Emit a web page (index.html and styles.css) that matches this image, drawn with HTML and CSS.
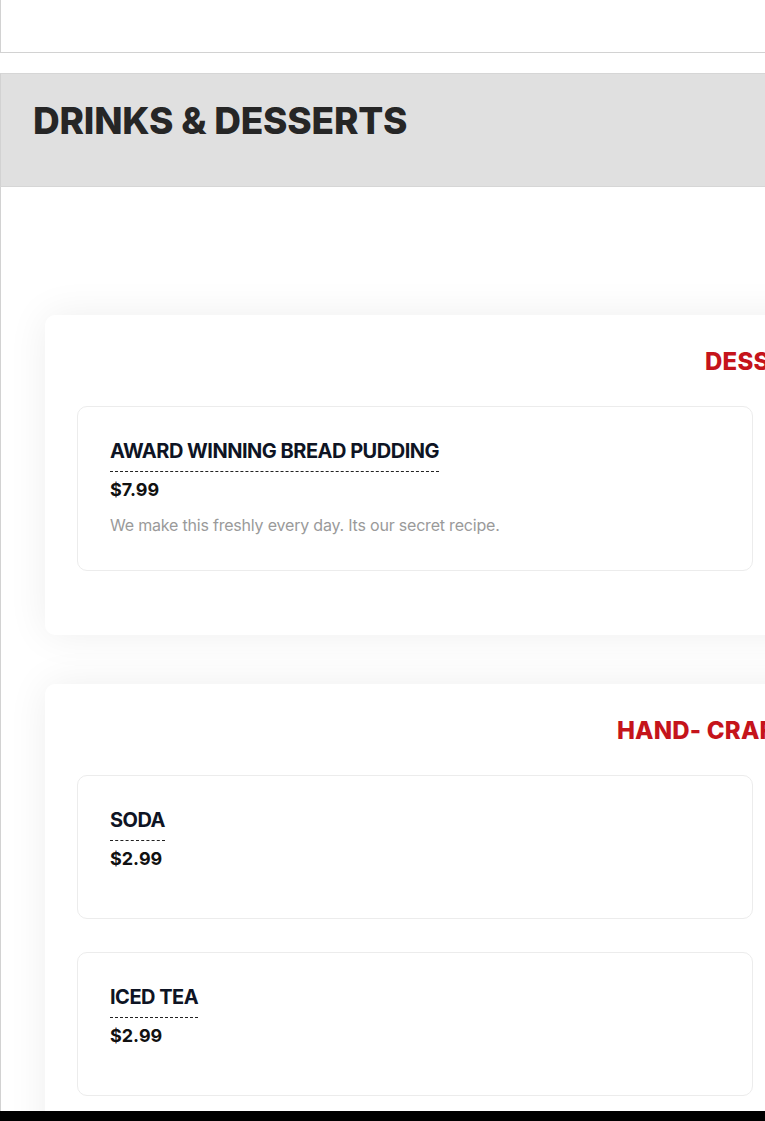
FILE: index.html
```html
<!DOCTYPE html>
<html lang="en">
<head>
<meta charset="utf-8">
<title>Drinks &amp; Desserts</title>
<link rel="stylesheet" href="styles.css">
</head>
<body>
<div class="page">
  <div class="topbox"></div>
  <header class="section-head">
    <h1 class="section-title">DRINKS &amp; DESSERTS</h1>
  </header>
  <main class="menu">
    <section class="menu-card">
      <h2 class="menu-card-title">DESSERTS</h2>
      <div class="items">
        <article class="item">
          <h3 class="item-name">AWARD WINNING BREAD PUDDING</h3>
          <div class="item-price">$7.99</div>
          <p class="item-desc">We make this freshly every day. Its our secret recipe.</p>
        </article>
      </div>
    </section>
    <section class="menu-card">
      <h2 class="menu-card-title">HAND- CRAFTED DRINKS</h2>
      <div class="items">
        <article class="item">
          <h3 class="item-name">SODA</h3>
          <div class="item-price">$2.99</div>
        </article>
        <article class="item">
          <h3 class="item-name">ICED TEA</h3>
          <div class="item-price">$2.99</div>
        </article>
      </div>
    </section>
  </main>
</div>
<div class="bottom-bar"></div>
</body>
</html>
```

FILE: styles.css
```css
html, body {
  margin: 0;
  padding: 0;
  overflow: hidden;
  background: #ffffff;
}

body {
  font-family: Inter, "Noto Sans", sans-serif;
  color: #111;
}

.page {
  width: 1560px;
}

.topbox {
  height: 52px;
  border-left: 1px solid #d2d2d2;
  border-bottom: 1px solid #d2d2d2;
}

.section-head {
  margin-top: 20px;
  height: 112px;
  background: #e0e0e0;
  border-top: 1px solid #d6d6d6;
  border-bottom: 1px solid #d6d6d6;
  border-left: 1px solid #d2d2d2;
  display: flex;
  align-items: center;
  padding-left: 32px;
}

.section-title {
  margin: 0 0 18px 0;
  font-size: 37px;
  line-height: 1.2;
  font-weight: 800;
  color: #262626;
  letter-spacing: -0.2px;
}

.menu {
  border-left: 1px solid #d2d2d2;
  padding: 128px 0 60px 44px;
  display: flex;
  flex-direction: column;
  gap: 49px;
}

.menu-card {
  width: 1448px;
  box-sizing: border-box;
  background: #fff;
  border-radius: 10px;
  box-shadow: 0 0 40px rgba(0, 0, 0, 0.07);
  padding: 32px 32px 64px;
}

.menu-card-title {
  margin: 0 0 29px;
  text-align: center;
  font-size: 24px;
  line-height: 30px;
  font-weight: 800;
  color: #c5141b;
  letter-spacing: 0.2px;
}

.items {
  width: 676px;
  display: flex;
  flex-direction: column;
  gap: 33px;
}

.item {
  box-sizing: border-box;
  min-height: 144px;
  border: 1px solid #ececec;
  border-radius: 10px;
  padding: 30px 32px 33px;
}

.item-name {
  display: inline-block;
  margin: 0;
  font-size: 20px;
  line-height: 28px;
  font-weight: 700;
  color: #0e1424;
  letter-spacing: -0.5px;
  padding-bottom: 6px;
  border-bottom: 1px dashed #222;
}

.item-price {
  margin-top: 5px;
  font-size: 18px;
  line-height: 26px;
  font-weight: 700;
  color: #111;
}

.item-desc {
  margin: 10px 0 0;
  font-size: 16px;
  line-height: 24px;
  color: #9a9a9a;
  letter-spacing: -0.2px;
}

.bottom-bar {
  position: fixed;
  left: 0;
  right: 0;
  bottom: 0;
  height: 10px;
  background: #000;
}
```
